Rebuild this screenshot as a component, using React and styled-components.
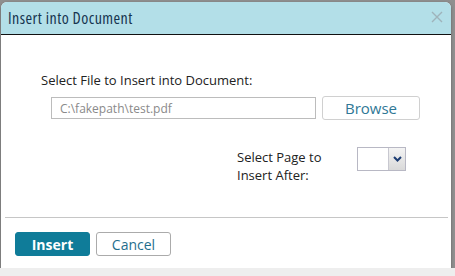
import React from 'react';
import styled, { createGlobalStyle } from 'styled-components';

const GlobalStyle = createGlobalStyle`
  html, body {
    margin: 0;
    padding: 0;
    background: #eeeeee;
    font-family: "Open Sans", "Noto Sans", sans-serif;
  }
`;

const Backdrop = styled('div')`
  width: 455px;
  height: 268px;
  padding: 2px 0 0 1px;
  box-sizing: border-box;
  background: #8f8f8f;
`;

const Dialog = styled('div')`
  width: 450px;
  height: 271px;
  display: flex;
  flex-direction: column;
  background: #fff;
  border-radius: 6px;
  box-shadow: 0 1px 3px rgba(0, 0, 0, 0.35);
  overflow: hidden;
`;

const Header = styled('div')`
  height: 32px;
  display: flex;
  align-items: center;
  justify-content: space-between;
  padding: 0 8px 0 7px;
  background: #b3dfe8;
  border-bottom: 1px solid #111;
`;

const Title = styled('h1')`
  margin: 0;
  font-size: 16px;
  font-stretch: 84%;
  letter-spacing: 0.45px;
  font-weight: 500;
  color: #16344f;
  line-height: 20px;
`;

const CloseIcon = styled('svg')`
  width: 12px;
  height: 12px;
  margin-top: -2px;
  stroke: #9fb3ba;
  stroke-width: 1.4;
`;

const Body = styled('div')`
  flex: 1;
  padding: 36px 0 0 40px;
`;

const Label = styled('div')`
  font-size: 13px;
  line-height: 18px;
  color: #222;
`;

const FileRow = styled('div')`
  display: flex;
  align-items: center;
  gap: 6px;
  margin: 7px 0 0 10px;
`;

const FileInput = styled('input')`
  width: 265px;
  height: 22px;
  box-sizing: border-box;
  padding: 0 8px;
  border: 1px solid #bcbcbc;
  font-family: inherit;
  font-size: 12px;
  color: #8a8a8a;
  background: #fff;
  outline: none;
`;

const Browse = styled('button')`
  width: 98px;
  height: 24px;
  box-sizing: border-box;
  border: 1px solid #d0d0d0;
  border-radius: 3px;
  background: #fff;
  font-family: inherit;
  font-size: 15px;
  color: #2f7896;
  padding: 0;
`;

const PageRow = styled('div')`
  display: flex;
  align-items: flex-start;
  margin: 27px 0 0 196px;
`;

const PageLabel = styled(Label)`
  width: 120px;
  margin-top: 1px;
`;

const Select = styled('div')`
  width: 49px;
  height: 24px;
  box-sizing: border-box;
  display: flex;
  border: 1px solid #b8b8c4;
  background: #fff;
`;

const SelectValue = styled('div')`
  flex: 1;
`;

const SelectArrow = styled('div')`
  width: 16px;
  display: flex;
  align-items: center;
  justify-content: center;
  border-left: 1px solid #c8c8d0;
  background: linear-gradient(#f4f4f4, #d9d9d9);
`;

const Footer = styled('div')`
  margin: 0 3px 0 4px;
  padding: 14px 0 17px 10px;
  border-top: 1px solid #c6c6c6;
  display: flex;
  gap: 6px;
`;

const Button = styled('button')`
  width: ${p => p.width}px;
  height: 24px;
  box-sizing: border-box;
  border-radius: 3px;
  font-family: inherit;
  font-size: 14px;
  padding: 0;
  border: 1px solid ${p => (p.primary ? '#0f7c99' : '#ababab')};
  background: ${p => (p.primary ? '#0f7c99' : '#fff')};
  color: ${p => (p.primary ? '#fff' : '#1f6e8d')};
  font-weight: ${p => (p.primary ? 700 : 400)};
`;

const App = () => (
  <>
    <GlobalStyle />
    <Backdrop>
      <Dialog>
        <Header>
          <Title>Insert into Document</Title>
          <CloseIcon viewBox="0 0 12 12" fill="none">
            <path d="M1 1 L11 11 M11 1 L1 11" />
          </CloseIcon>
        </Header>
        <Body>
          <Label>Select File to Insert into Document:</Label>
          <FileRow>
            <FileInput readOnly value="C:\fakepath\test.pdf" />
            <Browse>Browse</Browse>
          </FileRow>
          <PageRow>
            <PageLabel>
              Select Page to
              <br />
              Insert After:
            </PageLabel>
            <Select>
              <SelectValue />
              <SelectArrow>
                <svg width="9" height="6" viewBox="0 0 9 6">
                  <path d="M1 1 L4.5 4.5 L8 1" fill="none" stroke="#1d3d73" strokeWidth="2" />
                </svg>
              </SelectArrow>
            </Select>
          </PageRow>
        </Body>
        <Footer>
          <Button primary width={75}>Insert</Button>
          <Button width={75}>Cancel</Button>
        </Footer>
      </Dialog>
    </Backdrop>
  </>
);

export default App;
